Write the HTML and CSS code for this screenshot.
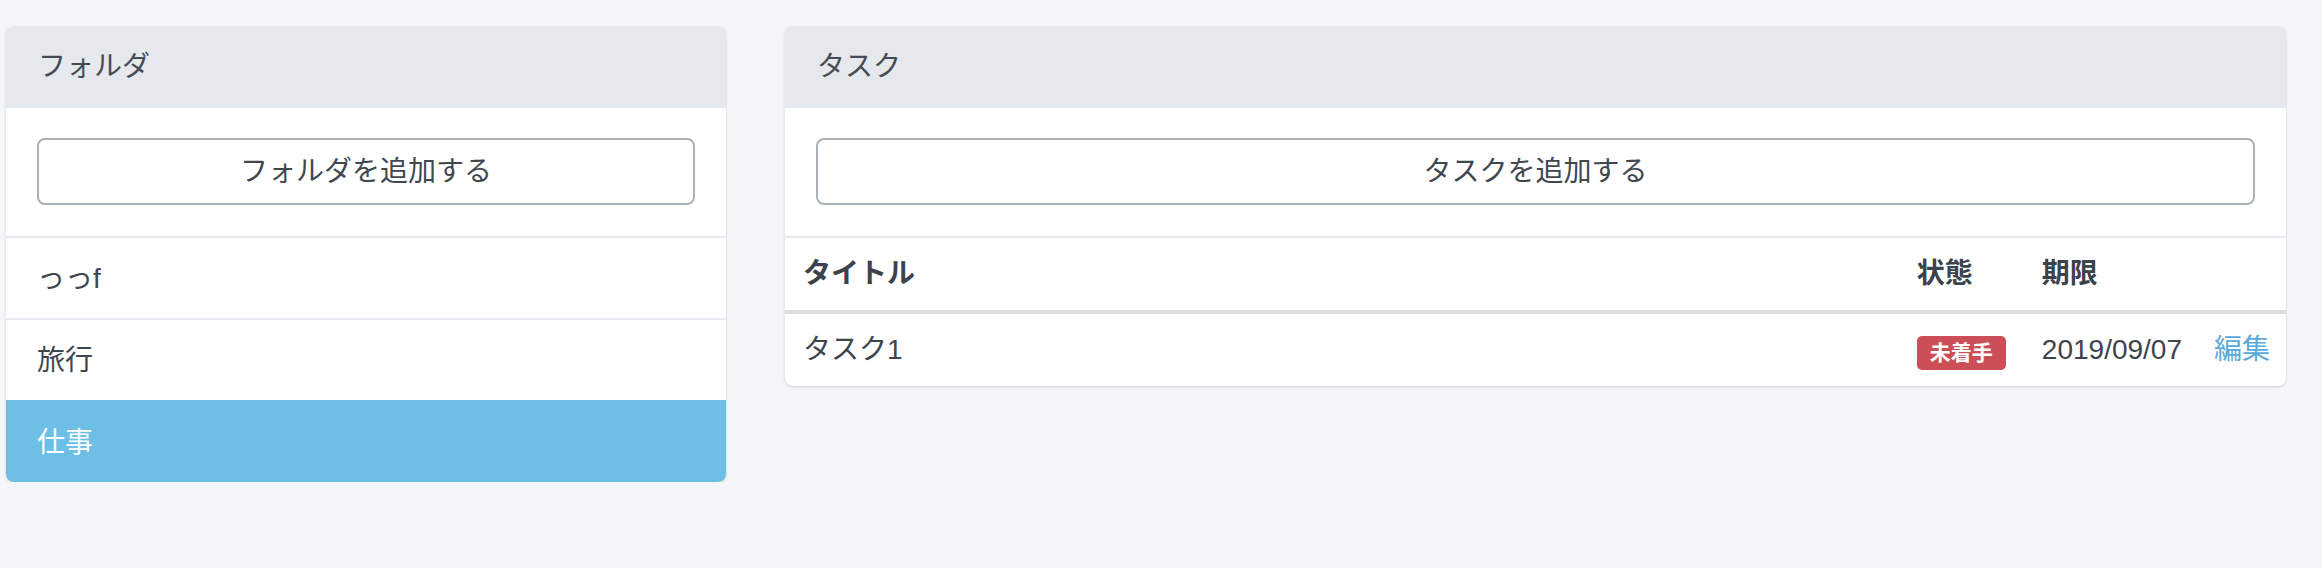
FILE: index.html
```html
<!DOCTYPE html>
<html lang="ja">
<head>
<meta charset="utf-8">
<title>ToDo</title>
<link rel="stylesheet" href="styles.css">
</head>
<body>
<div class="page">
  <section class="card card-folders">
    <div class="card-head">フォルダ</div>
    <div class="card-body"><button class="btn-add">フォルダを追加する</button></div>
    <ul class="list">
      <li class="list-item">っっf</li>
      <li class="list-item">旅行</li>
      <li class="list-item active">仕事</li>
    </ul>
  </section>
  <section class="card card-tasks">
    <div class="card-head">タスク</div>
    <div class="card-body"><button class="btn-add">タスクを追加する</button></div>
    <table class="task-table">
      <thead>
        <tr><th class="col-title">タイトル</th><th class="col-status">状態</th><th>期限</th><th></th></tr>
      </thead>
      <tbody>
        <tr>
          <td class="col-title">タスク1</td>
          <td class="col-status"><span class="badge">未着手</span></td>
          <td>2019/09/07</td>
          <td><a class="link" href="#">編集</a></td>
        </tr>
      </tbody>
    </table>
  </section>
</div>
</body>
</html>
```

FILE: styles.css
```css
* { box-sizing: border-box; }

html, body {
  margin: 0;
  background: #f5f6f8;
}

body {
  font-family: "Liberation Sans", "Noto Sans CJK JP", sans-serif;
  font-size: 28px;
  line-height: 40px;
  color: #40464f;
}

.page {
  display: flex;
  align-items: flex-start;
  gap: 59px;
  padding: 26px 36px 0 6px;
}

.card {
  background: #fff;
  border-radius: 8px;
  overflow: hidden;
  box-shadow: 0 1px 3px rgba(0, 0, 0, 0.16);
}

.card-folders { width: 720px; flex: none; }
.card-tasks { flex: 1; }

.card-head {
  background: #e5e8ec;
  padding: 21px 32px 21px;
  height: 82px;
  color: #454b54;
}

.card-body {
  padding: 30px 31px 31px;
  border-bottom: 2px solid #e6e9ed;
}

.btn-add {
  display: block;
  width: 100%;
  height: 67px;
  font: inherit;
  color: #41474f;
  background: #fff;
  border: 2px solid #aab0b9;
  border-radius: 8px;
  padding: 0 24px;
}

.list {
  list-style: none;
  margin: 0;
  padding: 0;
}

.list-item {
  padding: 21px 31px 19px;
  line-height: 40px;
  color: #3f454e;
}

.list-item + .list-item { border-top: 2px solid #e6e9ed; }

.list-item.active {
  background: #6ebfe5;
  border-top-color: #6ebfe5;
  color: #fff;
}

.task-table {
  width: 100%;
  border-collapse: collapse;
}

.task-table th,
.task-table td {
  padding: 16px;
  text-align: left;
  white-space: nowrap;
  line-height: 40px;
}

.task-table th {
  font-weight: bold;
  color: #3c424b;
  border-bottom: 4px solid #dcdcdc;
  vertical-align: bottom;
}

.task-table td { vertical-align: middle; color: #3e444d; }

.task-table .col-title {
  width: 100%;
  padding-left: 18px;
}

.task-table .col-status { padding-right: 20px; }

.badge {
  display: inline-block;
  background: #cc4f58;
  color: #fff;
  font-size: 21px;
  font-weight: bold;
  line-height: 21px;
  padding: 6px 13px 7px;
  border-radius: 5px;
  vertical-align: middle;
  position: relative;
  top: 1px;
}

.link {
  color: #5ba9d8;
  text-decoration: none;
}
```
